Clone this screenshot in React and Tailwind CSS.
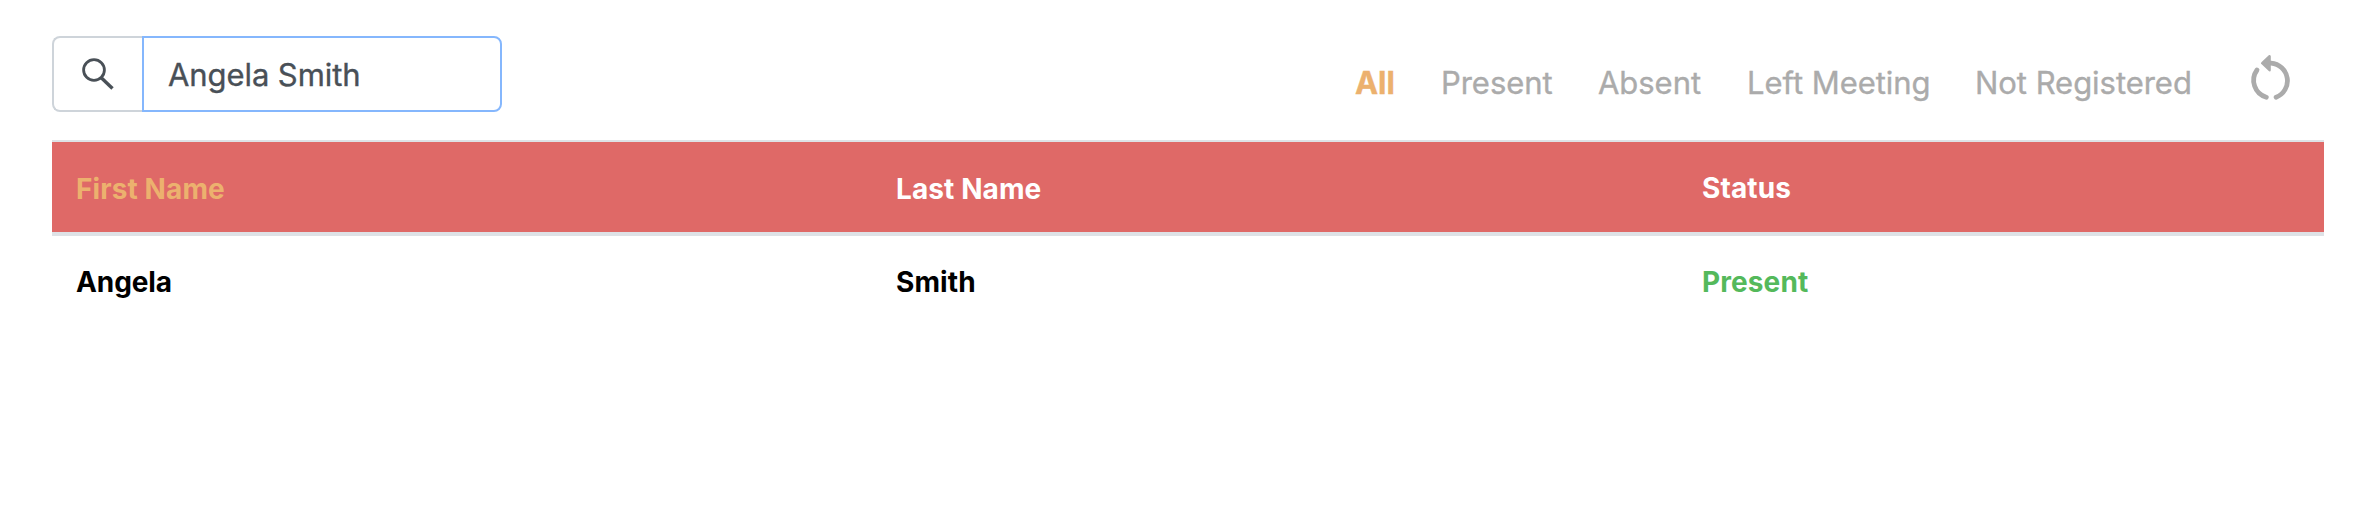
import React from "react";

const filters = [
  { label: "All", className: "w-[41px] font-bold text-[#ecb16e]" },
  { label: "Present", className: "w-[112px] text-[#ababab]" },
  { label: "Absent", className: "w-[104px] text-[#ababab]" },
  { label: "Left Meeting", className: "w-[183px] text-[#ababab]" },
  { label: "Not Registered", className: "w-[217px] text-[#ababab]" },
];

function SearchBox() {
  return (
    <div className="flex h-19 w-[450px]">
      <div className="flex w-[90px] items-center rounded-l-lg border-2 border-r-0 border-[#ced4da] pl-6">
        <svg width="36" height="36" viewBox="0 0 36 36" fill="none" stroke="#495057">
          <circle cx="16" cy="14" r="10.4" strokeWidth="2.8" />
          <path d="M23 21.5 34.5 32.5" strokeWidth="3.4" />
        </svg>
      </div>
      <input
        className="w-[360px] rounded-r-lg border-2 border-[#85b7fd] bg-white pt-0.5 pl-6 text-[31px] tracking-[-0.08px] text-[#495057] outline-none [-webkit-text-stroke:0.35px_#495057]"
        defaultValue="Angela Smith"
        aria-label="Search"
      />
    </div>
  );
}

export default function App() {
  return (
    <main className="h-[514px] w-[2376px] bg-white px-[52px] pt-9 font-['Inter',sans-serif]">
      <header className="flex h-[104px] items-start justify-between">
        <SearchBox />
        <nav className="flex pt-[23px] pr-[29px]">
          <div className="flex gap-[45px] text-[31px] leading-[48px] tracking-[-0.04px] whitespace-nowrap [-webkit-text-stroke:0.35px]">
            {filters.map((f) => (
              <button key={f.label} className={f.className + " text-left"}>
                {f.label}
              </button>
            ))}
          </div>
          <button className="-mt-1 ml-[55px] h-12 w-12" aria-label="Reset">
            <svg width="48" height="48" viewBox="0 0 48 48" fill="none" stroke="#ababab" strokeWidth="4.8" strokeLinecap="round">
              <path d="M22 8.2H24A17.6 17.6 0 0 1 29.1 42.2" />
              <path d="M10 15A17.6 17.6 0 0 0 19.3 42.2" />
              <path d="M15.2 8.2 22.6 1.2V15.2Z" fill="#ababab" strokeWidth="2.4" strokeLinejoin="round" />
            </svg>
          </button>
        </nav>
      </header>
      <section role="table" className="text-[28px] leading-[42px] font-bold tracking-[0.1px]">
        <div role="row" className="grid h-24 grid-cols-[820px_806px_1fr] items-center border-t-2 border-b-4 border-[#dee2e6] bg-[#df6967] pt-[3px] text-white">
          <div role="columnheader" className="pl-6 text-[#ecb16e]">First Name</div>
          <div role="columnheader" className="pl-6">Last Name</div>
          <div role="columnheader" className="pb-0.5 pl-6">Status</div>
        </div>
        <div role="row" className="grid h-[90px] grid-cols-[820px_806px_1fr] items-center pt-0.5 text-black">
          <div role="cell" className="pl-6 tracking-[-0.1px]">Angela</div>
          <div role="cell" className="pl-6">Smith</div>
          <div role="cell" className="pl-6 text-[#54b95b]">Present</div>
        </div>
      </section>
    </main>
  );
}
